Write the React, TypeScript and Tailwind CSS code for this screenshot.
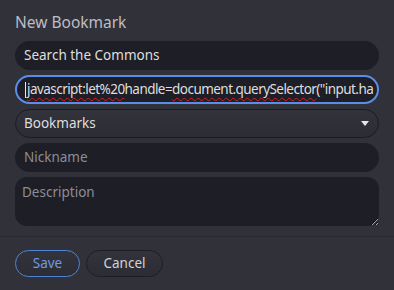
import React from "react";

const wavy = "underline decoration-wavy decoration-[#e01b24] underline-offset-[3px] decoration-1";

export default function App() {
  return (
    <div
      className="w-[394px] h-[290px] bg-[#31313a] flex flex-col overflow-hidden"
      style={{ fontFamily: '"Noto Sans", sans-serif' }}
    >
      <div className="flex flex-col px-[15px] pt-[11px]">
        <div className="text-[15.5px] leading-[22px] text-[#bdbdc4] h-[30px]">New Bookmark</div>
        <div className="flex flex-col gap-[5px]">
          <div className="h-[29px] w-[364px] rounded-full bg-[#1e1e26] flex items-center px-[9px] text-[13.5px] text-[#dededf]">
            Search the Commons
          </div>
          <div className="h-[29px] w-[364px] rounded-full bg-[#1e1e26] border-2 border-[#5a8ee6] flex items-center pl-[8px] text-[13.5px] tracking-[-0.55px] text-[#dededf] overflow-hidden whitespace-nowrap">
            <span className="w-px h-[16px] bg-[#e8e8e8] shrink-0 mr-px" />
            <span className={wavy}>javascript:let%20</span>
            <span>handle=</span>
            <span className={wavy}>document.querySelector</span>
            <span>("input.ha</span>
          </div>
          <div className="h-[29px] w-[364px] rounded-full bg-gradient-to-b from-[#33333c] to-[#2c2c35] border border-[#1b1b22] flex items-center justify-between pl-[8px] pr-[9px] text-[13.5px] text-[#dededf]">
            <span>Bookmarks</span>
            <svg width="8" height="5" viewBox="0 0 8 5">
              <path d="M0 0 H8 L4 5 Z" fill="#e6e6ea" />
            </svg>
          </div>
          <div className="h-[29px] w-[364px] rounded-full bg-[#1e1e26] flex items-center px-[9px] text-[13.5px] text-[#8d8d95]">
            Nickname
          </div>
          <textarea
            placeholder="Description"
            className="h-[49px] w-[364px] rounded-[12px] bg-[#1e1e26] px-[7px] pt-[5px] text-[13.5px] text-[#dededf] placeholder:text-[#8d8d95] outline-none"
            style={{ colorScheme: "dark" }}
          />
        </div>
      </div>
      <div className="mt-[10px] border-t border-[#2a2a32] flex gap-[6px] px-[15px] pt-[13px]">
        <button className="h-[27px] w-[65px] rounded-full border border-[#5183d8] bg-gradient-to-b from-[#33333c] to-[#2c2c35] text-[13.5px] text-[#6f9be6]">
          Save
        </button>
        <button className="h-[27px] w-[77px] rounded-full border border-[#1d1d24] bg-gradient-to-b from-[#33333c] to-[#2c2c35] text-[13.5px] text-[#d2d2d8]">
          Cancel
        </button>
      </div>
    </div>
  );
}
